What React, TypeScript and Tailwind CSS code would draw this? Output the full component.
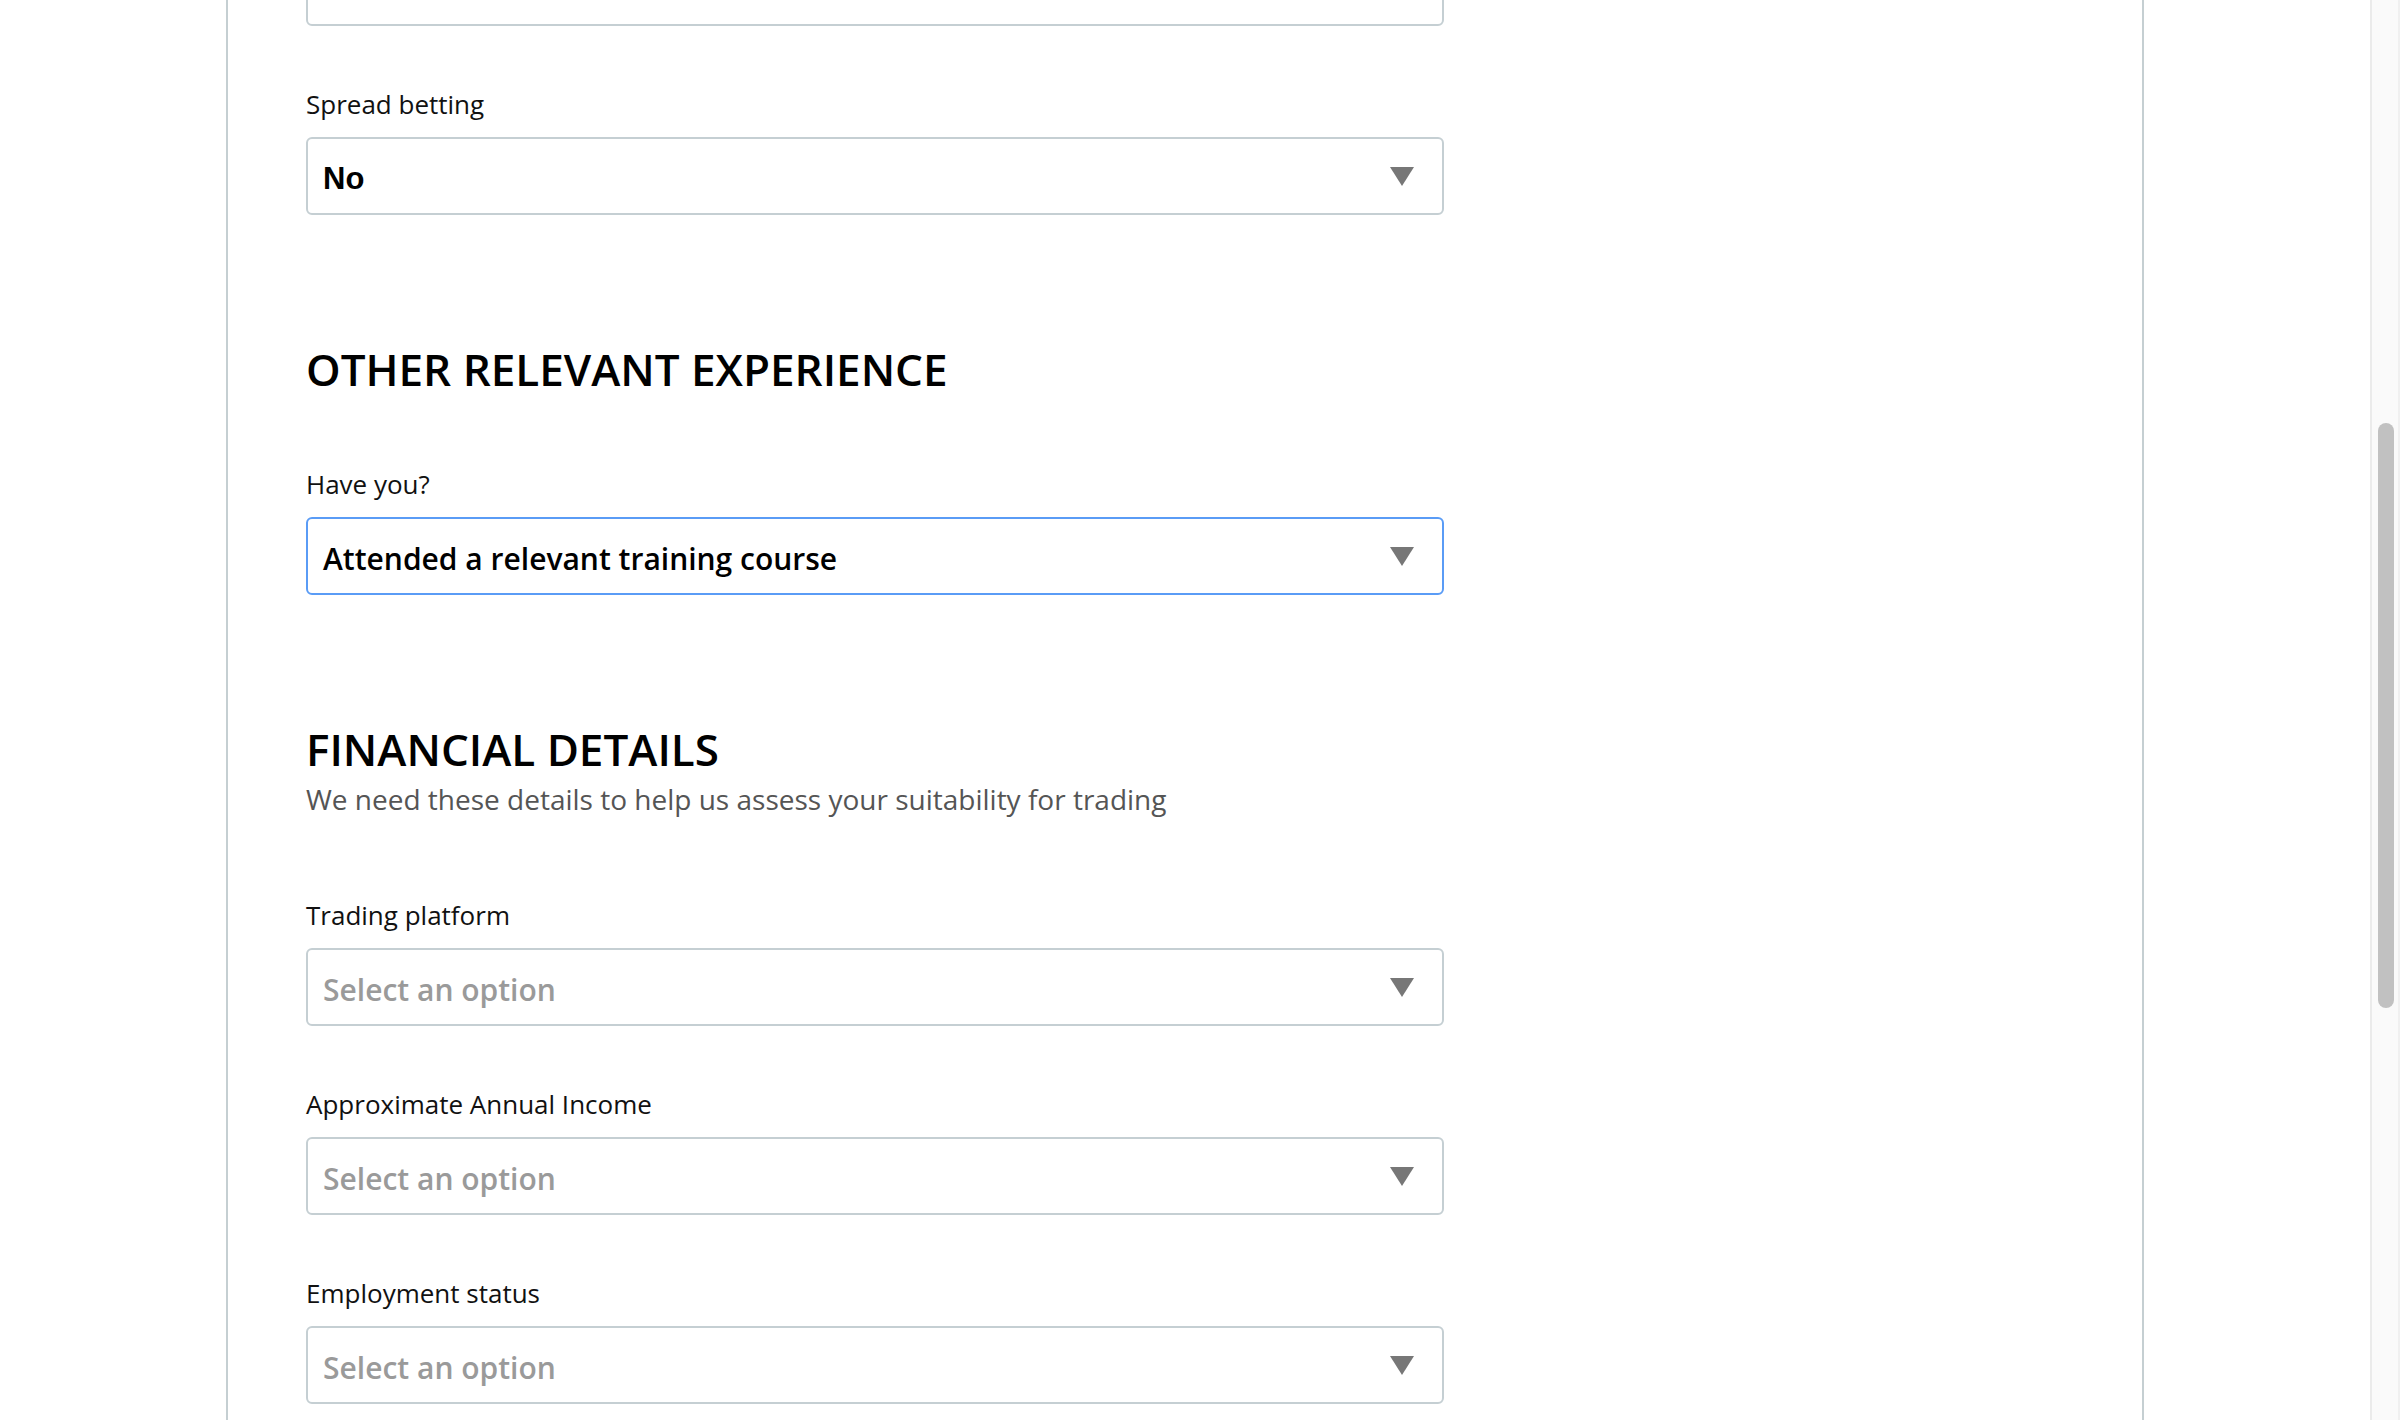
import React from "react";

type SelectProps = {
  value?: string;
  placeholder?: string;
  focused?: boolean;
  system?: boolean;
};

const Caret = () => (
  <svg width="24" height="19" viewBox="0 0 24 19" className="shrink-0">
    <polygon points="0,0 24,0 12,19" fill="#777777" />
  </svg>
);

const SelectBox = ({ value, placeholder, focused, system }: SelectProps) => {
  const border = focused ? "border-[#5a9cf6]" : "border-[#c5cfd3]";
  let text = "text-[30px] font-semibold text-black";
  if (!value) text = "text-[30px] font-semibold text-[#9a9a9a]";
  if (system) text = "text-[31px] font-['Liberation_Sans',Arial,sans-serif] font-bold text-black";
  return (
    <div
      className={`flex h-[78px] w-[1138px] shrink-0 items-center justify-between rounded-[6px] border-2 bg-white pl-[15px] pr-[28px] ${border}`}
    >
      <span className={`pt-[6px] leading-[40px] ${text}`}>
        {value ?? placeholder}
      </span>
      <Caret />
    </div>
  );
};

const Field = ({
  label,
  className,
  ...rest
}: SelectProps & { label: string; className?: string }) => (
  <div className={className}>
    <label className="mb-4 block text-[26px] leading-[34px] text-[#111]">
      {label}
    </label>
    <SelectBox {...rest} />
  </div>
);

export default function App() {
  return (
    <div className="flex h-[1420px] w-full overflow-hidden bg-white font-['Open_Sans',sans-serif]">
      <main className="min-w-0 flex-1">
        <div className="mx-auto flex h-full w-[1918px] flex-col border-x-2 border-[#c5cfd2] px-[78px]">
          <div className="-mt-[52px]">
            <SelectBox value="No" system />
          </div>

          <Field label="Spread betting" value="No" system className="mt-[61px]" />

          <h2 className="mt-[126px] text-[44px] font-semibold leading-[56px] text-black">
            OTHER RELEVANT EXPERIENCE
          </h2>
          <Field
            label="Have you?"
            value="Attended a relevant training course"
            focused
            className="mt-[70px]"
          />

          <h2 className="mt-[126px] text-[44px] font-semibold leading-[56px] text-black">
            FINANCIAL DETAILS
          </h2>
          <p className="mt-1 text-[28px] leading-[36px] text-[#555]">
            We need these details to help us assess your suitability for trading
          </p>

          <Field label="Trading platform" placeholder="Select an option" className="mt-[81px]" />
          <Field
            label="Approximate Annual Income"
            placeholder="Select an option"
            className="mt-[61px]"
          />
          <Field label="Employment status" placeholder="Select an option" className="mt-[61px]" />
        </div>
      </main>

      <div className="h-full w-[30px] shrink-0 border-x-2 border-l-[#ebebeb] border-r-[#f0f0f0] bg-[#fafafa] pl-[6px] pt-[423px]">
        <div className="h-[585px] w-[16px] rounded-full bg-[#c1c1c1]" />
      </div>
    </div>
  );
}
